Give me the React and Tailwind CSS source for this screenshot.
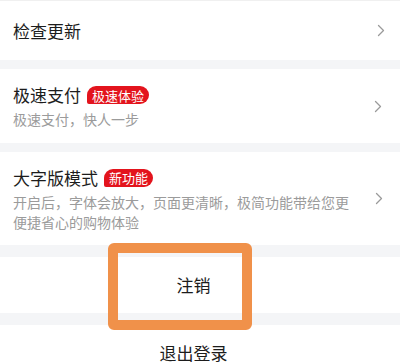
import React from "react";

const font = { fontFamily: '"Noto Sans CJK SC", "Noto Sans", sans-serif' };

function Chevron() {
  return (
    <svg width="8" height="13" viewBox="0 0 8 13" className="shrink-0">
      <polyline points="1.5,1.5 6.5,6.5 1.5,11.5" fill="none" stroke="#9a9a9a" strokeWidth="1.3" strokeLinecap="round" strokeLinejoin="round" />
    </svg>
  );
}

function Badge({ children }) {
  return (
    <span className="ml-[6px] inline-flex h-[18px] items-center rounded-[9px] rounded-bl-[2px] bg-[#e3141d] px-[5px] text-[13px] leading-none text-white">
      {children}
    </span>
  );
}

export default function App() {
  return (
    <div style={font} className="relative h-[362px] w-[400px] overflow-hidden bg-[#f4f5f7]">
      <div className="flex h-[60px] items-center justify-between border-t border-[#f0f0f0] bg-white pl-[13px] pr-[15px]">
        <span className="text-[17px] text-[#1c1c1c]">检查更新</span>
        <Chevron />
      </div>
      <div className="mt-[9px] flex h-[74px] items-center justify-between bg-white pl-[13px] pr-[18px]">
        <div className="flex flex-col">
          <div className="flex items-center h-[24px]">
            <span className="text-[17px] text-[#1c1c1c]">极速支付</span>
            <Badge>极速体验</Badge>
          </div>
          <span className="mt-[2px] text-[14px] leading-[20px] text-[#9b9b9b]">极速支付，快人一步</span>
        </div>
        <Chevron />
      </div>
      <div className="mt-[9px] flex h-[93px] items-center justify-between bg-white pl-[13px] pr-[17px]">
        <div className="flex w-[340px] flex-col">
          <div className="flex items-center h-[24px]">
            <span className="text-[17px] text-[#1c1c1c]">大字版模式</span>
            <Badge>新功能</Badge>
          </div>
          <span className="mt-[2px] text-[14px] leading-[20px] text-[#9b9b9b]">
            开启后，字体会放大，页面更清晰，极简功能带给您更便捷省心的购物体验
          </span>
        </div>
        <Chevron />
      </div>
      <div className="mt-[12px] flex h-[56px] items-center justify-center bg-white pr-[13px]">
        <span className="text-[17px] text-[#1c1c1c]">注销</span>
      </div>
      <div className="mt-[12px] flex h-[56px] items-center justify-center bg-white pr-[13px]">
        <span className="text-[17px] text-[#1c1c1c]">退出登录</span>
      </div>
      <div className="absolute left-[108px] top-[243px] h-[87px] w-[144px] rounded-[6px] border-[10px] border-[#f0914a]" />
    </div>
  );
}
